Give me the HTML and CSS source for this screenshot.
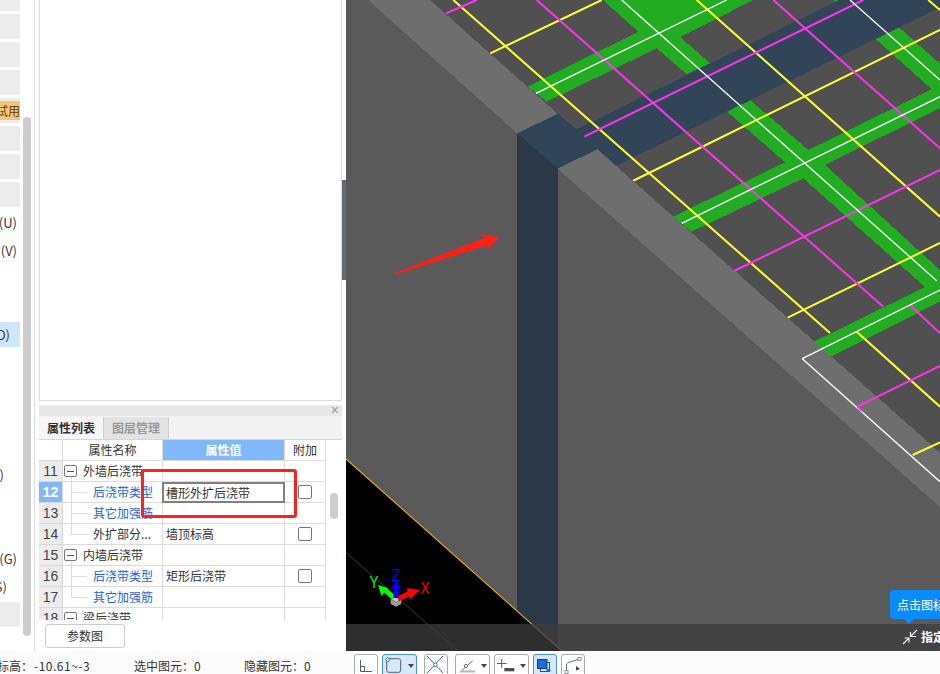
FILE: index.html
```html
<!DOCTYPE html>
<html lang="zh-CN">
<head>
<meta charset="utf-8">
<title>后浇带属性</title>
<link rel="stylesheet" href="styles.css">
</head>
<body>
<div class="app">
  <div class="main">
    <aside class="side">
      <nav class="menu">
        <div class="item grey"></div>
        <div class="item grey"></div>
        <div class="item grey"></div>
        <div class="item grey"></div>
        <div class="item grey"><span class="badge">试用</span></div>
        <div class="item grey"></div>
        <div class="item grey"></div>
        <div class="item grey"></div>
        <div class="item end3">(U)</div>
        <div class="item end3">(V)</div>
        <div class="item"></div>
        <div class="item"></div>
        <div class="item selected end10">D)</div>
        <div class="item"></div>
        <div class="item"></div>
        <div class="item"></div>
        <div class="item"></div>
        <div class="item end16">)</div>
        <div class="item"></div>
        <div class="item"></div>
        <div class="item end3">(G)</div>
        <div class="item end13">S)</div>
        <div class="item grey"></div>
      </nav>
      <div class="scroll"><div class="scroll-thumb"></div></div>
      <div class="panel-col">
        <div class="blank"></div>
        <section class="props">
          <div class="props-head"><span class="close">×</span></div>
          <div class="tabs"><span class="tab on">属性列表</span><span class="tab">图层管理</span></div>
          <div class="table-wrap">
            <div class="table">
              <div class="row head"><div class="num"></div><div class="cell center">属性名称</div><div class="cell center valhead">属性值</div><div class="cell center">附加</div></div>
              <div class="row"><div class="num">11</div><div class="cell group"><span class="minus"></span>外墙后浇带</div><div class="cell"></div><div class="cell"></div></div>
              <div class="row"><div class="num active">12</div><div class="cell child link">后浇带类型</div><div class="cell value editing">槽形外扩后浇带</div><div class="cell box"><span class="check"></span></div></div>
              <div class="row"><div class="num">13</div><div class="cell child link">其它加强筋</div><div class="cell"></div><div class="cell"></div></div>
              <div class="row"><div class="num">14</div><div class="cell child last">外扩部分...</div><div class="cell value">墙顶标高</div><div class="cell box"><span class="check"></span></div></div>
              <div class="row"><div class="num">15</div><div class="cell group"><span class="minus"></span>内墙后浇带</div><div class="cell"></div><div class="cell"></div></div>
              <div class="row"><div class="num">16</div><div class="cell child link">后浇带类型</div><div class="cell value">矩形后浇带</div><div class="cell box"><span class="check"></span></div></div>
              <div class="row"><div class="num">17</div><div class="cell child last link">其它加强筋</div><div class="cell"></div><div class="cell"></div></div>
              <div class="row"><div class="num">18</div><div class="cell group"><span class="minus"></span>梁后浇带</div><div class="cell"></div><div class="cell"></div></div>
            </div>
            <div class="table-scroll"><div class="table-thumb"></div></div>
          </div>
          <div class="redbox"></div>
          <div class="props-foot"><button class="param">参数图</button></div>
        </section>
      </div>
      <div class="handle-col"><div class="handle"></div></div>
    </aside>

    <div class="view">
      <svg class="scene" width="594" height="651" viewBox="346 0 594 651" xmlns="http://www.w3.org/2000/svg">
        <rect class="floor" x="346" y="0" width="594" height="651"/>
        <g class="green">
          <polygon points="527.7,86.7 638.3,31.7 603,0 753.3,0 680,37 710,63.3 686.7,74 656.7,48.3 546.7,101.7"/>
          <polygon points="603,0 639,0 661.7,20 638.3,31.7"/>
          <polygon points="727.3,111.7 750,100 808.3,150 931.7,89.3 875,38.3 898.3,26.7 940,63.7 940,108 825,165 940,270 940,301.7 830.7,356.7 814,341.7 925,287 803.3,178.3 691.7,231.7 673.3,216.7 785,162.3"/>
          <polygon points="833.3,0 840,0 836,3"/>
        </g>
        <polygon class="blue-top" points="517.3,133.3 557.7,113.7 576.7,129.3 839,0 940,0 940,7.5 616.7,165.5 597.3,149.3 557.7,168.7"/>
        <g class="lines">
          <line class="y" x1="453.3" y1="0" x2="830" y2="333"/>
          <line class="y" x1="696.7" y1="0" x2="940" y2="216.7"/>
          <line class="y" x1="856.7" y1="331.7" x2="940" y2="406.7"/>
          <line class="y" x1="490.3" y1="53.3" x2="601.7" y2="0"/>
          <line class="y" x1="632.7" y1="181" x2="940" y2="30"/>
          <line class="y" x1="787.7" y1="317.7" x2="940" y2="243"/>
          <line class="y" x1="928.3" y1="0" x2="940" y2="10"/>
          <line class="m" x1="446" y1="13.3" x2="476.7" y2="0"/>
          <line class="m" x1="536.7" y1="0" x2="883.3" y2="306.7"/>
          <line class="m" x1="584.3" y1="136.7" x2="863.3" y2="0"/>
          <line class="m" x1="773.3" y1="0" x2="940" y2="148.3"/>
          <line class="m" x1="734.3" y1="271" x2="940" y2="170"/>
          <line class="m" x1="910" y1="305" x2="940" y2="333.3"/>
          <line class="w" x1="536" y1="93.3" x2="726.7" y2="0"/>
          <line class="w" x1="621.7" y1="0" x2="936.7" y2="280.7"/>
          <line class="w" x1="850" y1="0" x2="940" y2="80"/>
          <line class="w" x1="681.7" y1="223.3" x2="940" y2="96.7"/>
        </g>
        <polygon class="wall-front" points="346,0 368,0 517.3,133.3 517.3,651 346,651"/>
        <polygon class="wall-top" points="368,0 430,0 557.7,113.7 517.3,133.3"/>
        <polygon class="col-front" points="517.3,133.3 557.7,168.7 557.7,651 517.3,651"/>
        <polygon class="wall-front" points="557.7,168.7 940,507 940,651 557.7,651"/>
        <polygon class="wall-top" points="557.7,168.7 597.3,149.3 940,452.6 940,507"/>
        <g class="lines">
          <line class="w" x1="802.3" y1="358.7" x2="940" y2="290"/>
          <line class="w" x1="802.3" y1="358.7" x2="940" y2="481.7"/>
          <line class="m" x1="857.3" y1="406.7" x2="940" y2="366"/>
          <line class="m" x1="857.3" y1="406.7" x2="862" y2="411"/>
          <line class="y" x1="912.7" y1="455" x2="940" y2="442.3"/>
        </g>
        <polygon class="void" points="346,459 562,651 346,651"/>
        <line class="edge-o" x1="346" y1="459" x2="562" y2="651"/>
        <line class="edge-g" x1="346" y1="552.5" x2="458" y2="651"/>
        <polygon class="arrow" points="393.500,273.500 485,237.700 481,234 499.300,237.300 487.700,250 488.300,245 395,274.500"/>
        <g class="gizmo">
          <polygon class="g-cube-top" points="396,596 401.300,599 396,602 390.700,599"/>
          <polygon class="g-cube" points="390.700,599 396,602 401.300,599 401.300,604 396,606.700 390.700,604"/>
          <line class="g-r" x1="398" y1="599" x2="410" y2="593"/>
          <polygon class="g-r-f" points="406.700,588 420,590 410,599"/>
          <line class="g-g" x1="394" y1="598" x2="384" y2="589"/>
          <polygon class="g-g-f" points="378,585 388,588 381.700,596"/>
          <line class="g-b" x1="396" y1="598" x2="396" y2="586"/>
          <polygon class="g-b-f" points="396,580 400.700,588 396,592 391.700,588"/>
          <text class="g-t-y" x="369.500" y="588" textLength="9" lengthAdjust="spacingAndGlyphs">Y</text>
          <text class="g-t-z" x="391.500" y="580.500" textLength="9" lengthAdjust="spacingAndGlyphs">Z</text>
          <text class="g-t-x" x="420.500" y="593.500" textLength="9" lengthAdjust="spacingAndGlyphs">X</text>
        </g>
        <rect class="band" x="346" y="624" width="594" height="27"/>
      </svg>
      <div class="tip">点击图标</div>
      <div class="hint">
        <svg width="16" height="16" viewBox="0 0 16 16" xmlns="http://www.w3.org/2000/svg"><path class="hint-ico" d="M15 1 8.500 7.500M8.500 3V7.500H14M1 15 7 9M7 13.500V9H2.500"/></svg>
        <span>指定</span>
      </div>
    </div>
  </div>

  <footer class="bottom">
    <div class="status">
      <span class="s1">标高：</span><span class="s2">-10.61~-3</span>
      <span class="s3">选中图元：0</span>
      <span class="s4">隐藏图元：0</span>
    </div>
    <div class="tools">
      <button class="tool">
        <svg width="22" height="20" viewBox="0 0 22 20"><path class="ti" d="M5.500 5V16.500H17M5.500 11.500H9.500V16.500"/></svg>
      </button>
      <button class="tool wide on">
        <svg width="22" height="20" viewBox="0 0 22 20"><rect class="ti" x="3.700" y="3.700" width="14" height="13.600" rx="2"/><circle class="ti-b" cx="4.700" cy="4.700" r="1.800"/></svg>
        <i class="caret"></i>
      </button>
      <button class="tool gap">
        <svg width="22" height="20" viewBox="0 0 22 20"><path class="ti" d="M2 1 18 18M18 1 2 18"/><circle class="ti-b" cx="10.300" cy="9.700" r="1.800"/></svg>
      </button>
      <button class="tool wide gap">
        <svg width="22" height="20" viewBox="0 0 22 20"><path class="ti-gr" d="M5.700 15.700 16.700 5.700"/><rect class="ti-gy" x="4" y="15.500" width="15" height="2"/><circle class="ti-b2" cx="10" cy="11" r="1.600"/></svg>
        <i class="caret"></i>
      </button>
      <button class="tool wide">
        <svg width="22" height="20" viewBox="0 0 22 20"><path class="ti" d="M6.700 4V13M2 8.500H11.500"/><rect class="ti-dk" x="9.300" y="13" width="10" height="3.300"/></svg>
        <i class="caret"></i>
      </button>
      <button class="tool on">
        <svg width="22" height="20" viewBox="0 0 22 20"><rect class="ti-bl2" x="6.500" y="7.500" width="9" height="9"/><rect class="ti-bl" x="3.500" y="4.500" width="9.500" height="9"/><polygon class="ti-blf" points="12.500,13 17.500,15.500 12.500,17"/></svg>
      </button>
      <button class="tool">
        <svg width="22" height="20" viewBox="0 0 22 20"><path class="ti-gr" d="M4.500 16V9Q5 8 8 7L17 4"/><rect class="ti-sq" x="3" y="15.500" width="3" height="3"/><rect class="ti-sq" x="16" y="2.500" width="3" height="3"/><polygon class="ti-dkf" points="14,11 18,14 14,15.500"/></svg>
      </button>
    </div>
  </footer>
</div>
</body>
</html>
```

FILE: styles.css
```css
* { box-sizing: border-box; }
html, body { margin: 0; padding: 0; height: 100%; overflow: hidden; background: #fdfdfd; }
body { font: 12px/1 "Noto Sans CJK SC", "Liberation Sans", sans-serif; color: #333; }
.app { width: 940px; height: 674px; display: flex; flex-direction: column; overflow: hidden; }
.main { display: flex; height: 651px; }

/* left column */
.side { width: 346px; height: 651px; display: flex; background: #fff; }
.menu { width: 20px; margin-top: -14px; margin-right: 3px; display: flex; flex-direction: column; gap: 3px; flex: none; }
.item { height: 25px; flex: none; display: flex; align-items: center; justify-content: flex-end; overflow: hidden; white-space: nowrap; color: #3a3a3a; font-size: 13px; }
.grey { background: #ececec; }
.selected { background: #d0e6ff; }
.end3 { padding-right: 3px; }
.end10 { padding-right: 10px; }
.end13 { padding-right: 13px; }
.end16 { padding-right: 16px; }
.badge { width: 20px; height: 19px; background: #f0c878; color: #6b3d08; font-size: 12px; display: flex; align-items: center; justify-content: flex-end; white-space: nowrap; }
.scroll { width: 8px; flex: none; margin-right: 3px; padding-top: 117px; }
.scroll-thumb { height: 519px; background: #cdcdcd; border-radius: 4px; }
.panel-col { width: 308px; flex: none; border-left: 1px solid #dcdcdc; padding-left: 4px; display: flex; flex-direction: column; }
.blank { height: 401px; flex: none; border: 1px solid #dcdcdc; border-top: 0; background: #fff; }
.handle-col { width: 4px; flex: none; padding-top: 180px; }
.handle { height: 100px; background: #5f6b78; }

/* property panel */
.props { position: relative; margin-top: 4px; flex: 1; }
.props-head { height: 11px; background: #e8e8e8; display: flex; justify-content: flex-end; align-items: center; padding-right: 3px; }
.close { color: #999; font: 14px/11px "Liberation Sans", sans-serif; }
.tabs { display: flex; height: 24px; background: #f3f3f3; padding-top: 1px; border-bottom: 1px solid #d5d5d5; }
.tab { width: 65px; display: flex; align-items: center; justify-content: center; background: #e3e3e3; color: #999; font-weight: 700; border-right: 1px solid #cfcfcf; }
.tab.on { background: #f6f6f6; color: #333; }
.table-wrap { display: flex; height: 180px; overflow: hidden; }
.table { width: 287px; flex: none; }
.row { display: grid; grid-template-columns: 24px 100px 122px 41px; height: 21px; }
.num { background: #ececec; border-right: 1px solid #d8d8d8; border-bottom: 1px solid #d8d8d8; display: flex; align-items: center; justify-content: center; font: 14px/1 "Liberation Sans", sans-serif; color: #444; }
.head .num { background: #fff; }
.num.active { background: #7fb9fb; color: #fff; font-weight: 700; }
.cell { border-right: 1px solid #dcdcdc; border-bottom: 1px solid #dcdcdc; display: flex; align-items: center; white-space: nowrap; position: relative; }
.center { justify-content: center; }
.valhead { background: #7fb9fb; color: #fff; font-weight: 700; }
.group { padding-left: 1px; }
.minus { width: 13px; height: 12px; border: 1px solid #777; border-radius: 2px; margin-right: 6px; display: flex; align-items: center; justify-content: center; }
.minus::before { content: ""; width: 7px; height: 1px; background: #555; }
.child { padding-left: 30px; }
.child::before { content: ""; position: absolute; left: 8px; top: -5px; bottom: -1px; border-left: 1px solid #ddd; }
.child::after { content: ""; position: absolute; left: 8px; top: 10px; width: 16px; border-top: 1px solid #ddd; }
.child.last::before { bottom: 10px; }
.link { color: #1f5fe6; }
.value { padding-left: 3px; }
.editing { border: 2px solid #808080; margin-left: -1px; padding-left: 2px; }
.box { justify-content: center; }
.check { width: 14px; height: 14px; border: 1px solid #777; border-radius: 2px; background: #fff; }
.table-scroll { width: 16px; flex: none; padding: 53px 4px 0 4px; }
.table-thumb { height: 26px; background: #cdcdcd; border-radius: 4px; }
.redbox { position: absolute; left: 102px; top: 64px; width: 156px; height: 49px; border: 3px solid #ff2020; border-radius: 3px; }
.props-foot { padding: 4px 0 0 6px; }
.param { width: 80px; height: 24px; background: #fff; border: 1px solid #ccc; border-radius: 3px; font: 12px/1 "Noto Sans CJK SC", sans-serif; color: #333; padding: 0; display: block; }

/* 3D view */
.view { width: 594px; height: 651px; position: relative; overflow: hidden; background: #505050; }
.scene { display: block; }
.floor { fill: #505050; }
.green polygon { fill: #22ac22; shape-rendering: crispEdges; }
.blue-top { fill: #324558; shape-rendering: crispEdges; }
.wall-front { fill: #5a5a5a; shape-rendering: crispEdges; }
.wall-top { fill: #6e6e6e; shape-rendering: crispEdges; }
.col-front { fill: #2a3848; shape-rendering: crispEdges; }
.void { fill: #000; shape-rendering: crispEdges; }
.lines line { fill: none; }
.y { stroke: #ffff33; stroke-width: 2; }
.m { stroke: #ff33ee; stroke-width: 2; }
.w { stroke: #fff; stroke-width: 1.3; }
.edge-o { stroke: #e6a61c; stroke-width: 1.2; }
.edge-g { stroke: #0a5c0a; stroke-width: 1; }
.arrow { fill: #ff2015; }
.g-cube { fill: #9a9a9a; }
.g-cube-top { fill: #c8c8c8; }
.g-r { stroke: #f00; stroke-width: 5; }
.g-r-f { fill: #f00; }
.g-g { stroke: #0f0; stroke-width: 5; }
.g-g-f { fill: #0f0; }
.g-b { stroke: #00f; stroke-width: 5; }
.g-b-f { fill: #00f; }
.gizmo text { font: 17px "Liberation Sans", sans-serif; }
.g-t-y { fill: #0f0; }
.g-t-z { fill: #00f; }
.g-t-x { fill: #f00; }
.band { fill: rgba(61, 61, 61, 0.76); }
.tip { position: absolute; left: 544px; top: 590px; width: 60px; height: 29px; background: #0a8cff; color: #fff; border-radius: 4px 0 0 4px; font-size: 12px; line-height: 29px; padding-left: 7px; white-space: nowrap; overflow: hidden; }
.view::after { content: ""; position: absolute; left: 558px; top: 619px; border: 5px solid transparent; border-top-color: #0a8cff; border-bottom: 0; }
.hint { position: absolute; left: 556px; top: 629px; display: flex; align-items: center; gap: 3px; color: #fff; font-weight: 700; white-space: nowrap; }
.hint-ico { fill: none; stroke: #eee; stroke-width: 1.2; }

/* bottom bar */
.bottom { height: 23px; display: flex; background: #fcfcfc; }
.status { width: 346px; flex: none; display: flex; align-items: center; color: #333; white-space: nowrap; padding-top: 7px; }
.s1 { margin-left: -3px; width: 37px; }
.s2 { width: 100px; letter-spacing: 0.5px; }
.s3 { width: 110px; }
.tools { display: flex; padding: 3px 0 0 8px; gap: 4px; align-items: flex-start; }
.tool { width: 24px; height: 24px; flex: none; background: #fff; border: 1px solid #aaa; border-radius: 3px; padding: 0; display: flex; align-items: flex-start; }
.tool svg { display: block; flex: none; }
.tool.wide { width: 35px; }
.tool.gap { margin-left: 3px; }
.tool.on { background: #d8e8fb; border-color: #4a90e2; }
.caret { margin: 9px 0 0 3px; border: 3px solid transparent; border-top: 4px solid #444; border-bottom: 0; width: 0; height: 0; }
.ti { fill: none; stroke: #555e6a; stroke-width: 1; }
.ti-b { fill: #fff; stroke: #1f7ae0; stroke-width: 1; }
.ti-b2 { fill: #fff; stroke: #667; stroke-width: 1; }
.ti-gy { fill: #b5b5b5; }
.ti-dk { fill: #4a4f57; }
.ti-bl { fill: #1d6fd8; stroke: #0f3f88; stroke-width: 1; }
.ti-bl2 { fill: none; stroke: #1d4f9c; stroke-width: 1; }
.ti-blf { fill: #1d6fd8; }
.ti-gr { fill: none; stroke: #6a7480; stroke-width: 1; }
.ti-sq { fill: #fff; stroke: #8a929c; stroke-width: 1; }
.ti-dkf { fill: #444; }
```
